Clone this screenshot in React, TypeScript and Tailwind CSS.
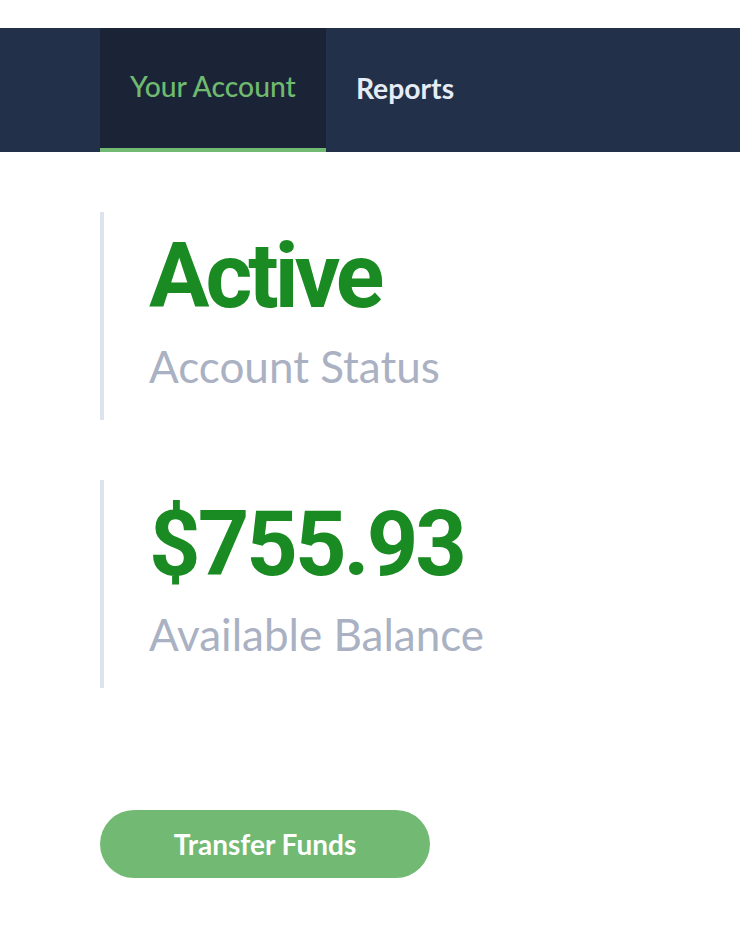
import React from 'react';

const stats = [
  { value: 'Active', label: 'Account Status', tracking: 'tracking-[-4px]' },
  { value: '$755.93', label: 'Available Balance', tracking: 'tracking-[-3px]' },
];

export default function App() {
  return (
    <div className="min-h-[926px] bg-white pt-[28px] font-['Lato','Liberation_Sans',sans-serif]">
      <nav className="flex h-[124px] bg-[#22304a] pl-[100px]">
        <a className="flex items-center border-b-4 border-[#72b974] bg-[#1a2436] px-[30px] pb-[3px] text-[28.3px] font-medium text-[#6fba6f]">
          Your Account
        </a>
        <a className="flex items-center px-[30px] pb-[3px] text-[28.3px] font-bold text-[#e6ecf5]">
          Reports
        </a>
      </nav>

      <div className="px-[100px] pt-[60px]">
        <div className="flex flex-col gap-[60px]">
          {stats.map((s) => (
            <div key={s.label} className="h-[208px] border-l-4 border-[#dde3ee] pt-[20px] pl-[45px]">
              <div className={`font-['Roboto',sans-serif] text-[90px] leading-none font-bold ${s.tracking} text-[#1a8a23]`}>
                {s.value}
              </div>
              <div className="mt-[22px] text-[44px] leading-none text-[#a9b1c3]">{s.label}</div>
            </div>
          ))}
        </div>

        <button className="mt-[122px] h-[68px] w-[330px] rounded-full bg-[#72b974] text-[28px] font-bold text-white">
          Transfer Funds
        </button>
      </div>
    </div>
  );
}
